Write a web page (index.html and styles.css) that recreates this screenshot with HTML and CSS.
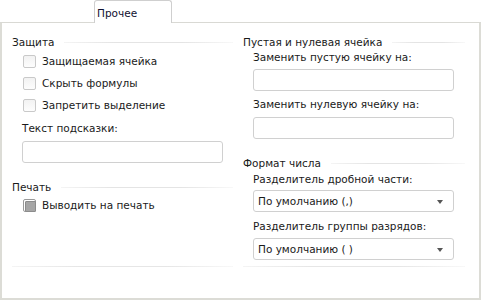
FILE: index.html
```html
<!DOCTYPE html>
<html lang="ru">
    <head>
        <meta charset="UTF-8">
        <title>Прочее</title>
        <link rel="stylesheet" href="styles.css">
    </head>
    <body>
        <div class="tabs">
            <div class="tab">Прочее</div>
        </div>
        <div class="panel">
            <div class="column">
                <div class="group-title"><span>Защита</span></div>
                <label class="check-row first"><span class="check"></span>Защищаемая ячейка</label>
                <label class="check-row"><span class="check"></span>Скрыть формулы</label>
                <label class="check-row"><span class="check"></span>Запретить выделение</label>
                <div class="field-label hint-label">Текст подсказки:</div>
                <div class="text-input"></div>

                <div class="group-title second"><span>Печать</span></div>
                <label class="check-row"><span class="check mixed"></span>Выводить на печать</label>

                <div class="spacer"></div>
                <div class="separator"></div>
            </div>
            <div class="column">
                <div class="group-title"><span>Пустая и нулевая ячейка</span></div>
                <div class="field-label first">Заменить пустую ячейку на:</div>
                <div class="text-input"></div>
                <div class="field-label">Заменить нулевую ячейку на:</div>
                <div class="text-input"></div>

                <div class="group-title second"><span>Формат числа</span></div>
                <div class="field-label after-title">Разделитель дробной части:</div>
                <div class="select">По умолчанию (,)<span class="arrow"></span></div>
                <div class="field-label">Разделитель группы разрядов:</div>
                <div class="select">По умолчанию ( )<span class="arrow"></span></div>

                <div class="spacer"></div>
                <div class="separator"></div>
            </div>
        </div>
    </body>
</html>
```

FILE: styles.css
```css
/* Global styles */
* {
    margin: 0;
    padding: 0;
    box-sizing: border-box;
}

body {
    width: 481px;
    height: 300px;
    background: #fff;
    color: #1a1a1a;
    font-family: "DejaVu Sans", sans-serif;
    font-size: 10.5px;
    line-height: 14px;
    display: flex;
    flex-direction: column;
}

/* Tab strip */
.tabs {
    height: 23px;
    border-bottom: 1px solid #d9d9d4;
    display: flex;
    padding-left: 94px;
}

.tab {
    width: 78px;
    height: 23px;
    border: 1px solid #cfcfcf;
    border-bottom: none;
    border-radius: 3px 3px 0 0;
    background: #fff;
    padding: 5px 0 0 2px;
    color: #101030;
}

/* Panel */
.panel {
    flex: 1;
    display: flex;
    gap: 10px;
    padding: 12px 14px 0 10px;
    border-left: 2px solid #dcdcd6;
    border-right: 2px solid #dcdcd6;
    border-bottom: 2px solid #dcdcd6;
}

.column {
    width: 221px;
    display: flex;
    flex-direction: column;
}

.column + .column {
    width: 222px;
}

.group-title {
    display: flex;
    align-items: center;
    gap: 10px;
    height: 14px;
}

.group-title::after {
    content: "";
    flex: 1;
    height: 1px;
    background: linear-gradient(to right, #f4f4f4, #e4e4e4 30%, #e4e4e4 70%, #f8f8f8);
}

.group-title.second {
    margin-top: 17px;
}

.check-row {
    display: flex;
    align-items: center;
    height: 22px;
    padding-left: 11px;
}

.check-row.first {
    margin-top: 1px;
}

.check {
    width: 13px;
    height: 13px;
    border: 1px solid #c9c9c9;
    border-radius: 2px;
    background: linear-gradient(#f2f2f2, #fdfdfd);
    margin-right: 6px;
}

.check.mixed {
    border-color: #9a9a9a;
    padding: 1px;
    background: #fff;
}

.check.mixed::before {
    content: "";
    display: block;
    width: 9px;
    height: 9px;
    background: #a6a6a6;
    border: 1px solid #8c8c8c;
    border-radius: 1px;
}

.field-label {
    padding-left: 10px;
    height: 14px;
    margin-top: 6px;
    margin-bottom: 6px;
}

.field-label.first {
    margin-top: 1px;
    margin-bottom: 5px;
}

.field-label.hint-label {
    margin-top: 5px;
}

.field-label.after-title {
    margin-top: 2px;
    margin-bottom: 4px;
}

.text-input {
    margin-left: 10px;
    width: 201px;
    height: 22px;
    border: 1px solid #d0d0d0;
    border-radius: 3px;
}

.select {
    margin-left: 10px;
    width: 201px;
    height: 22px;
    border: 1px solid #d0d0d0;
    border-radius: 3px;
    padding: 3px 0 0 4px;
    display: flex;
    justify-content: space-between;
}

.select + .field-label {
    margin-top: 7px;
    margin-bottom: 5px;
}

.arrow {
    width: 0;
    height: 0;
    border-left: 3.5px solid transparent;
    border-right: 3.5px solid transparent;
    border-top: 4px solid #555;
    margin: 6px 10px 0 0;
}

.spacer {
    flex: 1;
}

.separator {
    height: 1px;
    background: linear-gradient(to right, #f4f4f4, #e6e6e6 30%, #e6e6e6 70%, #f8f8f8);
    margin-bottom: 31px;
}
```
